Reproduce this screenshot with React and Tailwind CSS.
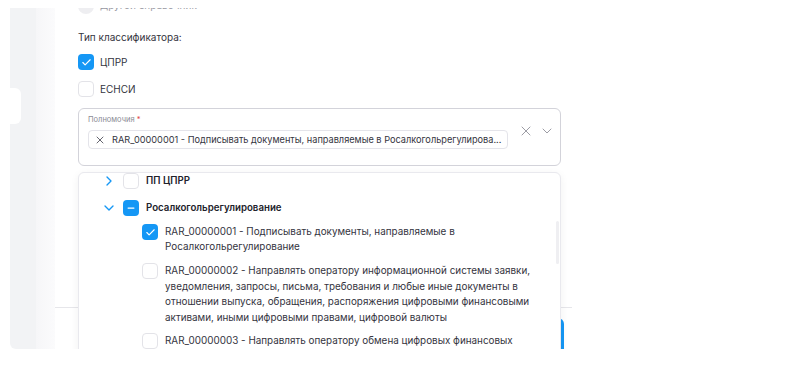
import { Check, Minus, ChevronRight, ChevronDown, X } from "lucide-react";

const CheckBox = ({ state }) => {
  if (state === "checked") {
    return (
      <div className="w-4 h-4 shrink-0 rounded-[4px] bg-[#1597f5] flex items-center justify-center">
        <Check size={11} strokeWidth={2.5} className="text-white" />
      </div>
    );
  }
  if (state === "partial") {
    return (
      <div className="w-4 h-4 shrink-0 rounded-[4px] bg-[#1597f5] flex items-center justify-center">
        <Minus size={10} strokeWidth={3} className="text-white" />
      </div>
    );
  }
  return <div className="w-4 h-4 shrink-0 rounded-[4px] border border-[#e3e3e8] bg-white" />;
};

const items = [
  {
    id: "1",
    state: "checked",
    text: "RAR_00000001 - Подписывать документы, направляемые в Росалкогольрегулирование",
  },
  {
    id: "2",
    state: "empty",
    text: "RAR_00000002 - Направлять оператору информационной системы заявки, уведомления, запросы, письма, требования и любые иные документы в отношении выпуска, обращения, распоряжения цифровыми финансовыми активами, иными цифровыми правами, цифровой валюты",
  },
  {
    id: "3",
    state: "empty",
    text: "RAR_00000003 - Направлять оператору обмена цифровых финансовых активов заявки",
  },
];

const App = () => {
  return (
    <div className="w-[803px] h-[378px] bg-white overflow-hidden font-['Inter',sans-serif] text-[#34343e]">
      {/* top strip */}
      <div className="h-[8px]" />

      <div className="flex h-[341px] overflow-hidden">
        <div className="w-[10px] shrink-0" />
        {/* left backdrop */}
        <div className="w-[26px] shrink-0 bg-[#f2f3f5] rounded-bl-[6px] pt-[80px]">
          <div className="w-[11px] h-[36px] bg-white rounded-r-[6px]" />
        </div>
        <div className="w-[19px] shrink-0 bg-gradient-to-r from-[#f6f6f8] to-[#fbfbfc]" />

        {/* modal */}
        <div className="w-[517px] shrink-0 bg-white relative flex flex-col">
          <div className="h-[299px] shrink-0 pl-[23px] pr-[11px] flex flex-col">
            {/* previous option, scrolled mostly out of view */}
            <div className="h-[6px] overflow-hidden">
              <div className="mt-[-10px] h-4 flex items-start gap-[6px]">
                <div className="w-4 h-4 rounded-full bg-[#eeeef1] shrink-0" />
                <span className="text-[10px] leading-4 mt-[-1px] text-[#9a9aa3]">
                  Другой справочник
                </span>
              </div>
            </div>

            <div className="mt-[15px] h-4 leading-4 text-[10px]">Тип классификатора:</div>

            <div className="mt-[9px] h-4 flex items-center gap-[6px]">
              <CheckBox state="checked" />
              <span className="text-[10px]">ЦПРР</span>
            </div>
            <div className="mt-[11px] h-4 flex items-center gap-[6px]">
              <CheckBox state="empty" />
              <span className="text-[10px]">ЕСНСИ</span>
            </div>

            {/* select */}
            <div className="mt-[11px] h-[58px] w-[483px] border border-[#d3d3da] rounded-[6px] flex pl-[9px] pt-[6px]">
              <div className="flex-1 flex flex-col">
                <div className="text-[7.5px] leading-[10px] text-[#8a8a94]">
                  Полномочия <span className="text-[#e04848]">*</span>
                </div>
                <div className="mt-[5px] h-[19px] w-[420px] border border-[#e4e4ea] rounded-[4px] flex items-center pl-[5px] gap-[6px]">
                  <X size={12} strokeWidth={1.8} className="text-[#555560] shrink-0" />
                  <span className="text-[9.2px] whitespace-nowrap">
                    RAR_00000001 - Подписывать документы, направляемые в Росалкогольрегулирова...
                  </span>
                </div>
              </div>
              <div className="flex items-start gap-[5px] pt-[8px] pr-[5px]">
                <X size={16} strokeWidth={1.3} className="text-[#8c8c96]" />
                <ChevronDown size={16} strokeWidth={1.3} className="text-[#8c8c96]" />
              </div>
            </div>
          </div>

          {/* footer */}
          <div className="flex-1 border-t border-[#e6e6ea] flex justify-end pr-[8px] pt-[10px]">
            <div className="w-[140px] h-[40px] rounded-[6px] bg-[#1597f5]" />
          </div>

          {/* dropdown */}
          <div className="absolute left-[23px] top-[164px] w-[483px] h-[200px] bg-white border border-[#e9e9ee] rounded-[6px] shadow-[0_2px_8px_rgba(0,0,0,0.06)] overflow-hidden">
            <div className="absolute right-[1px] top-[48px] w-[3px] h-[43px] rounded-full bg-[#efeff2]" />

            <div className="h-4 flex items-center pl-[22px]">
              <ChevronRight size={16} strokeWidth={2} className="text-[#1597f5] shrink-0" />
              <div className="ml-[6px]">
                <CheckBox state="empty" />
              </div>
              <span className="ml-[7px] mt-[1px] text-[9.7px] font-semibold text-[#22222b]">ПП ЦПРР</span>
            </div>

            <div className="mt-[11px] h-4 flex items-center pl-[22px]">
              <ChevronDown size={16} strokeWidth={2} className="text-[#1597f5] shrink-0" />
              <div className="ml-[6px]">
                <CheckBox state="partial" />
              </div>
              <span className="ml-[7px] mt-[1px] text-[9.7px] font-semibold text-[#22222b]">
                Росалкогольрегулирование
              </span>
            </div>

            <div className="mt-[8px] flex flex-col gap-[8.5px]">
              {items.map((it) => (
                <div key={it.id} className="flex items-start pl-[63px]">
                  <CheckBox state={it.state} />
                  <p className="ml-[7px] w-[376px] text-[9.9px] leading-[15.4px]">{it.text}</p>
                </div>
              ))}
            </div>
          </div>
        </div>
      </div>
    </div>
  );
};

export default App;
